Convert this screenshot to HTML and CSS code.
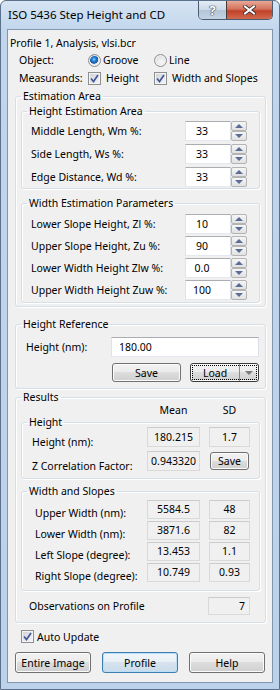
FILE: index.html
```html
<!DOCTYPE html>
<html lang="en">
<head>
  <meta charset="UTF-8">
  <title>ISO 5436 Step Height and CD</title>
  <link rel="stylesheet" href="styles.css">
</head>
<body>
  <div class="window">
    <div class="titlebar">
      <span class="title">ISO 5436 Step Height and CD</span>
      <div class="caps">
        <span class="cap help">?</span>
        <span class="cap close">
          <svg width="13" height="10" viewBox="0 0 13 10">
            <path d="M2 1.5 L11 8.5 M11 1.5 L2 8.5" stroke="#3b2a28" stroke-width="3.6" stroke-linecap="square"/>
            <path d="M2 1.5 L11 8.5 M11 1.5 L2 8.5" stroke="#fff" stroke-width="2" stroke-linecap="square"/>
          </svg>
        </span>
      </div>
    </div>

    <div class="client">
      <div class="profile">Profile 1, Analysis, vlsi.bcr</div>

      <div class="opt-row first">
        <span>Object:</span>
        <span class="opt"><span class="radio checked"></span>Groove</span>
        <span class="opt"><span class="radio"></span>Line</span>
      </div>
      <div class="opt-row">
        <span>Measurands:</span>
        <span class="opt chk"><span class="check"><svg width="9" height="9" viewBox="0 0 9 9"><path d="M1 4.5 L3.5 7.5 L8 1" fill="none" stroke="#45589a" stroke-width="1.7"/></svg></span>Height</span>
        <span class="opt chk"><span class="check"><svg width="9" height="9" viewBox="0 0 9 9"><path d="M1 4.5 L3.5 7.5 L8 1" fill="none" stroke="#45589a" stroke-width="1.7"/></svg></span>Width and Slopes</span>
      </div>

      <fieldset class="group estimation">
        <legend>Estimation Area</legend>
        <fieldset class="group sub height-area">
          <legend>Height Estimation Area</legend>
          <div class="param-row"><span>Middle Length, Wm %:</span><input class="edit" value="33"><span class="spin"><span class="spin-btn up"></span><span class="spin-btn down"></span></span></div>
          <div class="param-row"><span>Side Length, Ws %:</span><input class="edit" value="33"><span class="spin"><span class="spin-btn up"></span><span class="spin-btn down"></span></span></div>
          <div class="param-row"><span>Edge Distance, Wd %:</span><input class="edit" value="33"><span class="spin"><span class="spin-btn up"></span><span class="spin-btn down"></span></span></div>
        </fieldset>
        <fieldset class="group sub width-area">
          <legend>Width Estimation Parameters</legend>
          <div class="param-row"><span>Lower Slope Height, Zl %:</span><input class="edit" value="10"><span class="spin"><span class="spin-btn up"></span><span class="spin-btn down"></span></span></div>
          <div class="param-row"><span>Upper Slope Height, Zu %:</span><input class="edit" value="90"><span class="spin"><span class="spin-btn up"></span><span class="spin-btn down"></span></span></div>
          <div class="param-row"><span>Lower Width Height Zlw %:</span><input class="edit" value="0.0"><span class="spin"><span class="spin-btn up"></span><span class="spin-btn down"></span></span></div>
          <div class="param-row"><span>Upper Width Height Zuw %:</span><input class="edit" value="100"><span class="spin"><span class="spin-btn up"></span><span class="spin-btn down"></span></span></div>
        </fieldset>
      </fieldset>

      <fieldset class="group reference">
        <legend>Height Reference</legend>
        <div class="ref-row">
          <span>Height (nm):</span>
          <input class="edit ref-input" value="180.00">
        </div>
        <div class="ref-buttons">
          <button class="btn">Save</button>
          <button class="btn split"><span class="split-main">Load</span><span class="split-arrow"></span></button>
        </div>
      </fieldset>

      <fieldset class="group results">
        <legend>Results</legend>
        <div class="res-head">
          <span></span>
          <span>Mean</span>
          <span>SD</span>
        </div>
        <fieldset class="group sub res-height">
          <legend>Height</legend>
          <div class="res-row tall first"><span class="res-label">Height (nm):</span><span class="ro">180.215</span><span class="ro">1.7</span></div>
          <div class="res-row tall"><span class="res-label">Z Correlation Factor:</span><span class="ro">0.943320</span><button class="btn small">Save</button></div>
        </fieldset>
        <fieldset class="group sub res-width">
          <legend>Width and Slopes</legend>
          <div class="res-row"><span class="res-label">Upper Width (nm):</span><span class="ro">5584.5</span><span class="ro">48</span></div>
          <div class="res-row"><span class="res-label">Lower Width (nm):</span><span class="ro">3871.6</span><span class="ro">82</span></div>
          <div class="res-row"><span class="res-label">Left Slope (degree):</span><span class="ro">13.453</span><span class="ro">1.1</span></div>
          <div class="res-row"><span class="res-label">Right Slope (degree):</span><span class="ro">10.749</span><span class="ro">0.93</span></div>
        </fieldset>
        <div class="obs-row">
          <span>Observations on Profile</span>
          <span class="ro obs">7</span>
        </div>
      </fieldset>

      <div class="auto-row">
        <span class="check"><svg width="9" height="9" viewBox="0 0 9 9"><path d="M1 4.5 L3.5 7.5 L8 1" fill="none" stroke="#45589a" stroke-width="1.7"/></svg></span>
        <span>Auto Update</span>
      </div>

      <div class="bottom-buttons">
        <button class="btn big">Entire Image</button>
        <button class="btn big default">Profile</button>
        <button class="btn big">Help</button>
      </div>
    </div>
  </div>
</body>
</html>
```

FILE: styles.css
```css
* {
  box-sizing: border-box;
}
body {
  margin: 0;
  font-family: "Noto Sans", "DejaVu Sans", sans-serif;
  font-size: 10.5px;
  color: #000;
  background: #fff;
}
.window {
  width: 280px;
  height: 690px;
  display: flex;
  flex-direction: column;
  padding: 0 6px 6px;
  border: 1px solid #5b708a;
  border-radius: 6px 6px 0 0;
  background: linear-gradient(#d6e4f3, #c1d5ec 30px, #bcd1ea);
}
.titlebar {
  height: 28px;
  display: flex;
  align-items: flex-start;
}
.title {
  flex: 1;
  padding: 6px 0 0 1px;
  font-size: 11.5px;
  line-height: 16px;
}
.caps {
  display: flex;
  height: 19px;
  border: 1px solid #4b5b70;
  border-top: none;
  border-radius: 0 0 5px 5px;
  overflow: hidden;
}
.cap {
  display: flex;
  align-items: center;
  justify-content: center;
}
.help {
  width: 27px;
  background: linear-gradient(#e4ecf5, #cbd8e6 50%, #b3c5d9 51%, #c3d3e4);
  color: #fff;
  font-weight: bold;
  font-size: 13px;
  text-shadow: 0 0 1px #27384c, 0 0 1px #27384c, 0 0 1px #27384c;
}
.close {
  width: 46px;
  border-left: 1px solid #4b3a3a;
  background: linear-gradient(#e8a895, #d2725c 45%, #c2412a 55%, #d06a4f);
}

.client {
  flex: 1;
  border: 1px solid #8197b0;
  background: #f0f0f0;
}
.profile {
  padding: 5px 0 0 2px;
  line-height: 16px;
}
.opt-row {
  display: grid;
  grid-template-columns: 69px 66px auto;
  align-items: center;
  height: 16px;
  margin-top: 2px;
  padding-left: 11px;
}
.opt-row.first {
  margin-top: 1px;
}
.opt {
  display: flex;
  align-items: center;
  gap: 2px;
}
.opt.chk {
  gap: 5px;
}
.radio {
  width: 13px;
  height: 13px;
  border: 1px solid #8e8f8f;
  border-radius: 50%;
  background: radial-gradient(circle at 60% 65%, #f8f8f8, #d3d5d9);
  box-shadow: inset 0 0 0 1px #f2f2f2;
}
.radio.checked {
  background: radial-gradient(circle at 45% 40%, #9adfff 0, #2a8ee0 1.6px, #13539f 4px, #e4e6e8 4.6px, #f6f6f6);
}
.check {
  width: 13px;
  height: 13px;
  display: flex;
  align-items: center;
  justify-content: center;
  border: 1px solid #8e8f8f;
  background: linear-gradient(135deg, #cdd1d7, #f7f7f7);
  box-shadow: inset 0 0 0 1px #f4f4f4;
}

/* group boxes */
.group {
  margin: 0;
  padding: 0;
  min-width: 0;
  border: 1px solid #d5dfe5;
  border-radius: 3px;
  box-shadow: inset 1px 1px 0 #fff, 1px 1px 0 #fff;
}
.group legend {
  margin-left: 5px;
  padding: 0 2px;
  line-height: 15px;
}
.estimation,
.reference,
.results {
  margin-left: 7px;
  width: 251px;
}
.sub {
  margin: 0 5px;
}
.estimation {
  margin-top: 3px;
  padding-bottom: 3px;
}
.height-area {
  padding: 2px 0 1px;
}
.width-area {
  margin-top: 7px;
  padding: 3px 0 2px;
}
.param-row {
  display: grid;
  grid-template-columns: 1fr 46px 16px;
  align-items: center;
  height: 20px;
  padding: 0 12px 0 9px;
}
.height-area .param-row + .param-row {
  margin-top: 3px;
}
.width-area .param-row + .param-row {
  margin-top: 2px;
}
.edit {
  height: 20px;
  margin: 0;
  padding: 0 12px 0 0;
  font: inherit;
  color: #000;
  text-align: center;
  background: #fff;
  border: 1px solid;
  border-color: #abadb3 #dbdfe6 #e3e9ef #e2e3ea;
  border-radius: 0;
  outline: none;
}
.spin {
  display: flex;
  flex-direction: column;
  height: 20px;
}
.spin-btn {
  height: 10px;
  display: flex;
  align-items: center;
  justify-content: center;
  border: 1px solid #b4b4b4;
  border-radius: 2px;
  background: linear-gradient(#f6f6f6, #e1e1e1);
}
.spin-btn::after {
  content: "";
  border-left: 4px solid transparent;
  border-right: 4px solid transparent;
}
.spin-btn.up::after {
  border-bottom: 4px solid #5a6d96;
}
.spin-btn.down::after {
  border-top: 4px solid #5a6d96;
}

.reference {
  margin-top: 10px;
  padding-bottom: 6px;
}
.ref-row {
  display: grid;
  grid-template-columns: 1fr 148px;
  align-items: center;
  margin-top: 5px;
  padding: 0 6px 0 10px;
}
.ref-input {
  text-align: left;
  padding: 0 0 0 7px;
}
.ref-buttons {
  display: flex;
  justify-content: flex-end;
  gap: 9px;
  margin-top: 6px;
  padding-right: 6px;
}

.btn {
  height: 19px;
  width: 69px;
  padding: 0;
  font: inherit;
  color: #000;
  border: 1px solid #707070;
  border-radius: 3px;
  background: linear-gradient(#f2f2f2, #ebebeb 50%, #dddddd 50%, #cfcfcf);
  box-shadow: inset 0 0 0 1px #fbfbfb;
}
.split {
  display: flex;
  align-items: stretch;
  border-color: #3a3a3a;
  outline: 1px dotted #000;
  outline-offset: -3px;
}
.split-main {
  flex: 1;
  display: flex;
  align-items: center;
  justify-content: center;
}
.split-arrow {
  width: 19px;
  display: flex;
  align-items: center;
  justify-content: center;
  border-left: 1px solid #8a8a8a;
}
.split-arrow::after {
  content: "";
  border-left: 4px solid transparent;
  border-right: 4px solid transparent;
  border-top: 4px solid #7a7a7a;
}

.results {
  margin-top: 1px;
  padding-bottom: 7px;
}
.res-head,
.res-row {
  display: grid;
  grid-template-columns: 1fr 53px 41px;
  column-gap: 9px;
  padding: 0 9px 0 10px;
}
.res-head {
  height: 10px;
  margin: 0 6px;
  line-height: 10px;
  text-align: center;
}
.res-height {
  padding-bottom: 3px;
}
.res-row {
  align-items: start;
  height: 21px;
}
.res-row.tall {
  height: 24px;
}
.res-row.first {
  margin-top: -3px;
}
.res-label {
  padding-top: 5px;
  line-height: 16px;
}
.tall .res-label {
  padding-top: 6px;
  line-height: 18px;
}
.res-width {
  margin-top: 5px;
  padding: 1px 0 6px;
}
.res-width .res-row {
  padding-left: 13px;
}
.ro {
  height: 19px;
  line-height: 17px;
  text-align: center;
  border: 1px solid #d9d9d9;
  border-top-color: #cbcbcb;
  background: #f0f0f0;
}
.tall .ro {
  height: 20px;
  line-height: 18px;
}
.btn.small {
  width: 39px;
  height: 18px;
  margin: 1px 0 0 1px;
}
.obs-row {
  display: flex;
  align-items: center;
  height: 18px;
  margin-top: 6px;
  padding: 0 15px 0 13px;
}
.obs-row span:first-child {
  flex: 1;
}
.ro.obs {
  width: 42px;
  height: 18px;
  text-align: right;
  padding-right: 4px;
}

.auto-row {
  display: flex;
  align-items: center;
  gap: 3px;
  height: 13px;
  margin-top: 7px;
  padding-left: 13px;
}
.bottom-buttons {
  display: flex;
  gap: 11px;
  margin-top: 9px;
  padding-left: 7px;
}
.btn.big {
  width: 76px;
  height: 21px;
}
.btn.default {
  border-color: #3c7fb1;
  background: linear-gradient(#f1f6fa, #e6eef5 50%, #d6e3ee 50%, #cbdbea);
  box-shadow: inset 0 0 0 1px #b9def5;
}
```
